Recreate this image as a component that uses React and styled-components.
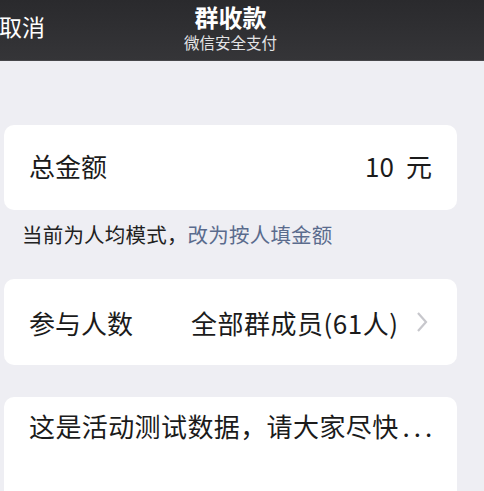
import React from 'react';
import styled, { createGlobalStyle } from 'styled-components';

const GlobalStyle = createGlobalStyle`
  html, body {
    margin: 0;
    padding: 0;
    background: #eeeef3;
  }
  body {
    font-family: "Noto Sans CJK SC", "Noto Sans", sans-serif;
    color: #1b1b1b;
  }
`;

const Page = styled.div`
  width: 484px;
  height: 491px;
  overflow: hidden;
  background: #eeeef3;
`;

const NavBar = styled.div`
  height: 60px;
  display: grid;
  grid-template-columns: 1fr auto 1fr;
  align-items: center;
  padding-right: 23px;
  background: linear-gradient(#2a2a2d, #353538);
  border-bottom: 1px solid #46464a;
  color: #fff;
`;

const NavButton = styled.div`
  font-size: 23px;
  line-height: 1;
  margin-left: -1px;
  margin-top: -8px;
  justify-self: start;
`;

const NavTitle = styled.div`
  display: flex;
  flex-direction: column;
  align-items: center;
  gap: 4px;
`;

const Title = styled.div`
  font-size: 24px;
  font-weight: 700;
  line-height: 24px;
  margin-top: -4px;
`;

const Subtitle = styled.div`
  font-size: 15.5px;
  line-height: 18px;
  color: #e4e4e6;
`;

const Content = styled.div`
  padding: 64px 27px 0 4px;
`;

const Card = styled.div`
  background: #fff;
  border-radius: 10px;
  height: ${(p) => p.$height}px;
  margin-top: ${(p) => p.$top || 0}px;
  display: flex;
  align-items: ${(p) => (p.$alignTop ? 'flex-start' : 'center')};
  padding: ${(p) => (p.$alignTop ? '11px' : '0')} 25px ${(p) => p.$lift || 0}px 25px;
  font-size: 26px;
  box-sizing: border-box;
`;

const Label = styled.div`
  width: ${(p) => p.$width || 'auto'};
  flex-shrink: 0;
`;

const Amount = styled.div`
  margin-left: auto;
  display: flex;
  gap: 12px;
`;

const Value = styled.div`
  flex: 1;
  letter-spacing: 0.5px;
`;

const Chevron = styled.svg`
  width: 14px;
  height: 22px;
  margin-right: 3px;
`;

const Hint = styled.div`
  font-size: 20.5px;
  line-height: 28px;
  margin: 10px 0 0 18px;
  color: #222;
  letter-spacing: 0.2px;
`;

const Link = styled.span`
  color: #5a6b8d;
`;

const Note = styled.div`
  line-height: 36px;
  white-space: nowrap;
  letter-spacing: 0.4px;
`;

const Dots = styled.span`
  letter-spacing: 4px;
  margin-left: 4px;
`;

export default function App() {
  return (
    <Page>
      <GlobalStyle />
      <NavBar>
        <NavButton>取消</NavButton>
        <NavTitle>
          <Title>群收款</Title>
          <Subtitle>微信安全支付</Subtitle>
        </NavTitle>
        <div />
      </NavBar>
      <Content>
        <Card $height={85} $lift={5}>
          <Label>总金额</Label>
          <Amount>
            <span>10</span>
            <span>元</span>
          </Amount>
        </Card>
        <Hint>
          当前为人均模式，<Link>改为按人填金额</Link>
        </Hint>
        <Card $height={86} $top={31}>
          <Label $width="162px">参与人数</Label>
          <Value>全部群成员(61人)</Value>
          <Chevron viewBox="0 0 14 22">
            <path d="M3 2l8 9-8 9" fill="none" stroke="#c7c7cc" strokeWidth="2.2" />
          </Chevron>
        </Card>
        <Card $height={130} $top={32} $alignTop>
          <Note>
            这是活动测试数据，请大家尽快<Dots>...</Dots>
          </Note>
        </Card>
      </Content>
    </Page>
  );
}
